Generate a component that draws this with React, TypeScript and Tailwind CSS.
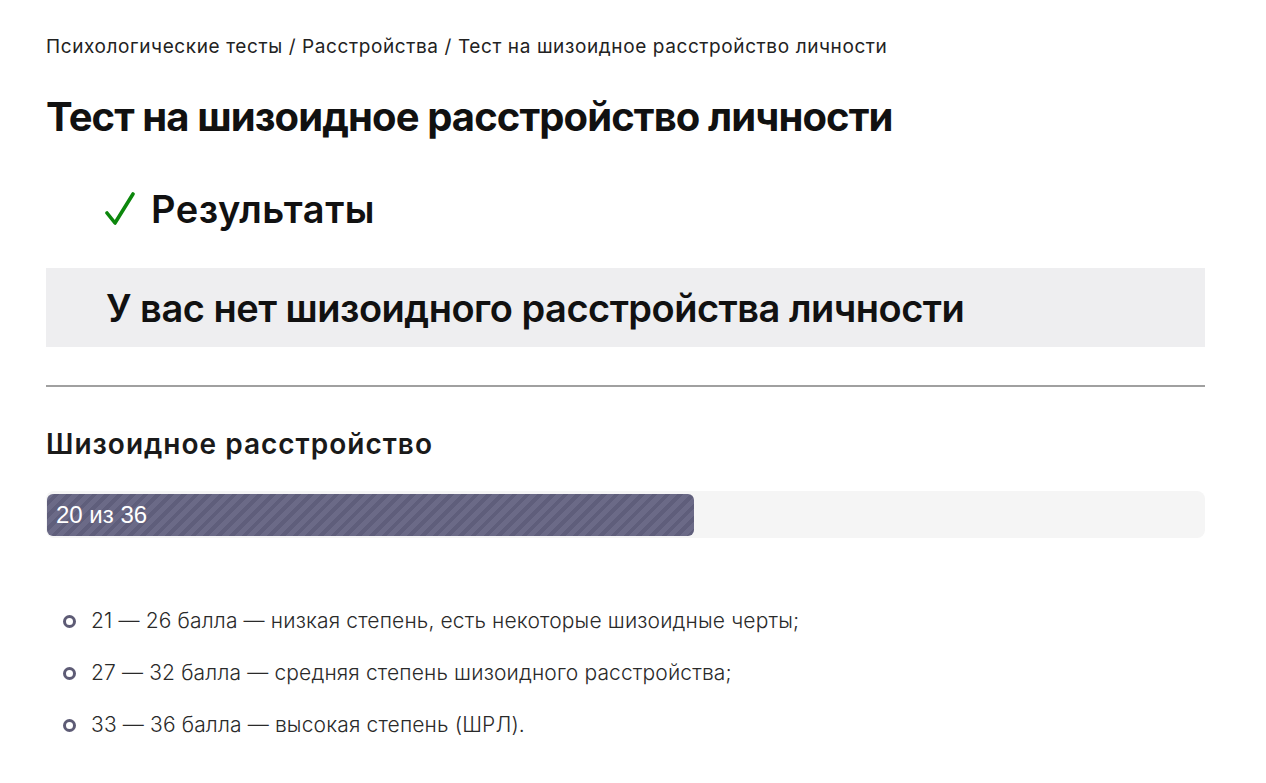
import React from "react";

const ranges = [
  "21 — 26 балла — низкая степень, есть некоторые шизоидные черты;",
  "27 — 32 балла — средняя степень шизоидного расстройства;",
  "33 — 36 балла — высокая степень (ШРЛ).",
];

function Check() {
  return (
    <svg width="30" height="34" viewBox="0 0 30 34" className="shrink-0">
      <path
        d="M2 21 L10 31 L28 2"
        fill="none"
        stroke="#0c870c"
        strokeWidth="3.6"
        strokeLinecap="round"
        strokeLinejoin="round"
      />
    </svg>
  );
}

export default function App() {
  const score = 20;
  const max = 36;

  return (
    <div className="min-h-screen bg-white font-['Inter',sans-serif] text-[#111]">
      <div className="w-[1159px] ml-[46px] pt-[34px]">
        <div className="text-[19px] leading-[26px] text-[#222] tracking-[0.6px]">
          Психологические тесты / Расстройства / Тест на шизоидное расстройство личности
        </div>

        <h1 className="mt-[33px] text-[40px] leading-[48px] font-bold tracking-[-0.9px]">
          Тест на шизоидное расстройство личности
        </h1>

        <div className="mt-[45px] ml-[59px] flex items-center gap-[16px] text-[38px] leading-[46px] font-semibold">
          <Check />
          <span className="tracking-[0.5px]">Результаты</span>
        </div>

        <div className="mt-[36px] h-[79px] bg-[#eeeef0] flex items-center pl-[60px]">
          <span className="text-[38px] leading-[46px] font-semibold tracking-[-0.5px]">
            У вас нет шизоидного расстройства личности
          </span>
        </div>

        <hr className="mt-[38px] border-0 border-t-2 border-[#a0a0a0]" />

        <h2 className="mt-[39px] text-[28px] leading-[36px] font-semibold text-[#1a1a1a] tracking-[1px]">
          Шизоидное расстройство
        </h2>

        <div className="mt-[29px] h-[47px] rounded-[8px] bg-[#f5f5f5] flex items-center px-[1px]">
          <div
            className="h-[42px] rounded-[6px] flex items-center pl-[9px] bg-[repeating-linear-gradient(135deg,#6b6a87_0px,#6b6a87_5px,#5f5e7b_5px,#5f5e7b_9px)]"
            style={{ width: `calc(${(score / max) * 100}% + 4px)` }}
          >
            <span className="text-white text-[24px] leading-none font-['Liberation_Sans',sans-serif]">
              {score} из {max}
            </span>
          </div>
        </div>

        <ul className="mt-[69px] flex flex-col gap-[24px]">
          {ranges.map((item, i) => (
            <li key={i} className="flex items-center h-[28px]">
              <span className="ml-[17px] w-[13px] h-[13px] rounded-full border-[3px] border-[#5d5b75]" />
              <span className="ml-[15px] text-[21px] font-light text-[#2a2a2a] tracking-[0.15px]">
                {item}
              </span>
            </li>
          ))}
        </ul>
      </div>
    </div>
  );
}
